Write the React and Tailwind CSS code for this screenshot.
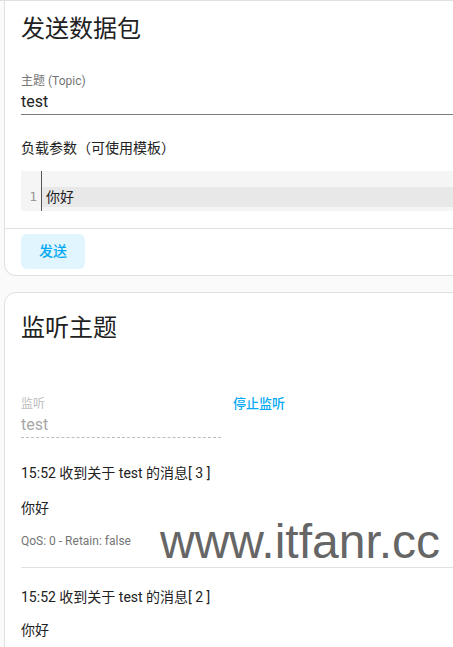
import React from "react";

const font = { fontFamily: 'Roboto, "Noto Sans CJK SC", sans-serif' };

function Message({ n }) {
  return (
    <div>
      <div className="h-5 text-[14px] leading-5 text-[#212121]">15:52 收到关于 test 的消息[ {n} ]</div>
      <div className="mt-[15px] h-5 text-[14px] leading-5 text-[#212121]">你好</div>
    </div>
  );
}

export default function App() {
  return (
    <div className="relative w-[453px] h-[647px] overflow-hidden bg-[#fafafa]" style={font}>
      <div className="h-px bg-[#e0e0e0]" />
      {/* Card 1 */}
      <div className="ml-[4px] w-[480px] bg-white border-l border-r border-b border-[#e0e0e0] rounded-bl-xl">
        <div className="pl-[16px] pr-[28px]">
          <div className="pt-[12px] h-[44px] text-[24px] leading-8 text-[#212121]">发送数据包</div>
          <div className="mt-[28px] h-4 text-[12px] leading-4 text-[#757575]">主题 (Topic)</div>
          <div className="h-[26px] pt-px text-[16px] leading-6 text-[#212121] border-b border-[#7a7a7a]">test</div>
          <div className="mt-[23px] h-5 text-[14px] leading-5 text-[#212121]">负载参数（可使用模板）</div>
          <div className="mt-[13px] h-10 bg-[#f5f5f5] flex">
            <div className="w-[21px] border-r border-[#555] flex flex-col">
              <div className="h-4" />
              <div className="h-5 text-[13px] leading-5 text-[#999] text-right pr-[4px]" style={{ fontFamily: '"DejaVu Sans Mono", monospace' }}>1</div>
            </div>
            <div className="flex-1 flex flex-col">
              <div className="h-4" />
              <div className="h-5 bg-[#e8e8e8] pl-[4px] text-[14px] leading-5 text-[#212121]">你好</div>
            </div>
          </div>
          <div className="h-[17px]" />
        </div>
        <div className="border-t border-[#e0e0e0] pl-[16px] pt-[5px] pb-[6px]">
          <button className="w-[64px] h-[35px] rounded-md bg-[#e1f5fe] text-[#03a9f4] text-[14px] font-medium" style={font}>
            发送
          </button>
        </div>
      </div>

      {/* Card 2 */}
      <div className="mt-[16px] ml-[4px] w-[480px] bg-white border border-[#e0e0e0] rounded-xl">
        <div className="pl-[16px] pr-[28px]">
          <div className="pt-[19px] h-[52px] text-[24px] leading-8 text-[#212121]">监听主题</div>
          <div className="mt-[51px] flex">
            <div className="w-[200px]">
              <div className="h-4 text-[12px] leading-4 text-[#bdbdbd]">监听</div>
              <div className="h-[26px] pt-px text-[16px] leading-6 text-[#a8a8a8] border-b border-dashed border-[#bdbdbd]">test</div>
            </div>
            <div className="ml-[12px] h-4 text-[13px] leading-4 font-medium text-[#03a9f4]">停止监听</div>
          </div>
          <div className="mt-[25px]">
            <Message n={3} />
            <div className="mt-[15px] h-4 text-[12px] leading-4 text-[#757575]">QoS: 0 - Retain: false</div>
          </div>
        </div>
        <div className="ml-[16px] mt-[18px] border-t border-[#e0e0e0]" />
        <div className="pl-[16px] pt-[19px]">
          <div className="h-5 text-[14px] leading-5 text-[#212121]">15:52 收到关于 test 的消息[ 2 ]</div>
          <div className="mt-[13px] h-5 text-[14px] leading-5 text-[#212121]">你好</div>
          <div className="h-20" />
        </div>
      </div>

      {/* watermark */}
      <div
        className="absolute left-[160px] top-[516px] text-[48px] leading-[52px] text-[#666666] pointer-events-none"
        style={{ fontFamily: '"Liberation Sans", Arial, sans-serif' }}
      >
        www.itfanr.cc
      </div>
    </div>
  );
}
